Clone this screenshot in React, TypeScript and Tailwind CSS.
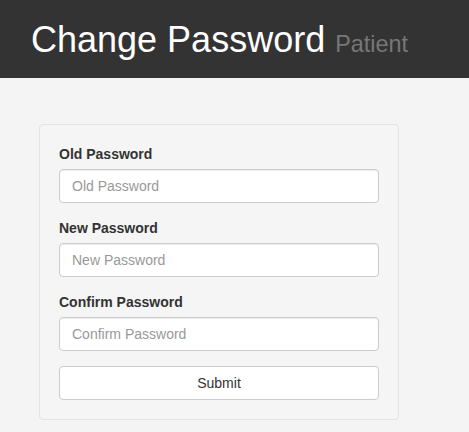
export default function App() {
  const fields = ['Old Password', 'New Password', 'Confirm Password'];

  return (
    <div className="min-h-screen bg-[#f4f4f4] font-['Liberation_Sans',Arial,sans-serif] text-[14px] text-[#333]">
      <header className="h-[78px] bg-[#333] pl-[31px] pt-[20px]">
        <h1 className="text-[36px] leading-[40px] text-white">
          Change Password <small className="text-[23.4px] text-[#777]">Patient</small>
        </h1>
      </header>

      <div className="pl-[39px] pt-[46px]">
        <div className="w-[360px] rounded-[4px] border border-[#e3e3e3] bg-[#f5f5f5] p-[19px]">
          <form onSubmit={(e) => e.preventDefault()}>
            {fields.map((f) => (
              <div key={f} className="mb-[15px]">
                <label className="mb-[5px] block font-bold leading-[20px]">{f}</label>
                <input
                  type="password"
                  placeholder={f}
                  className="block h-[34px] w-full rounded-[4px] border border-[#ccc] bg-white px-[12px] py-[6px] text-[14px] leading-[20px] text-[#555] placeholder:text-[#999] shadow-[inset_0_1px_1px_rgba(0,0,0,0.075)] outline-none"
                />
              </div>
            ))}
            <button
              type="submit"
              className="block h-[34px] w-full rounded-[4px] border border-[#ccc] bg-white text-[14px] leading-[20px] text-[#333]"
            >
              Submit
            </button>
          </form>
        </div>
      </div>
    </div>
  );
}
